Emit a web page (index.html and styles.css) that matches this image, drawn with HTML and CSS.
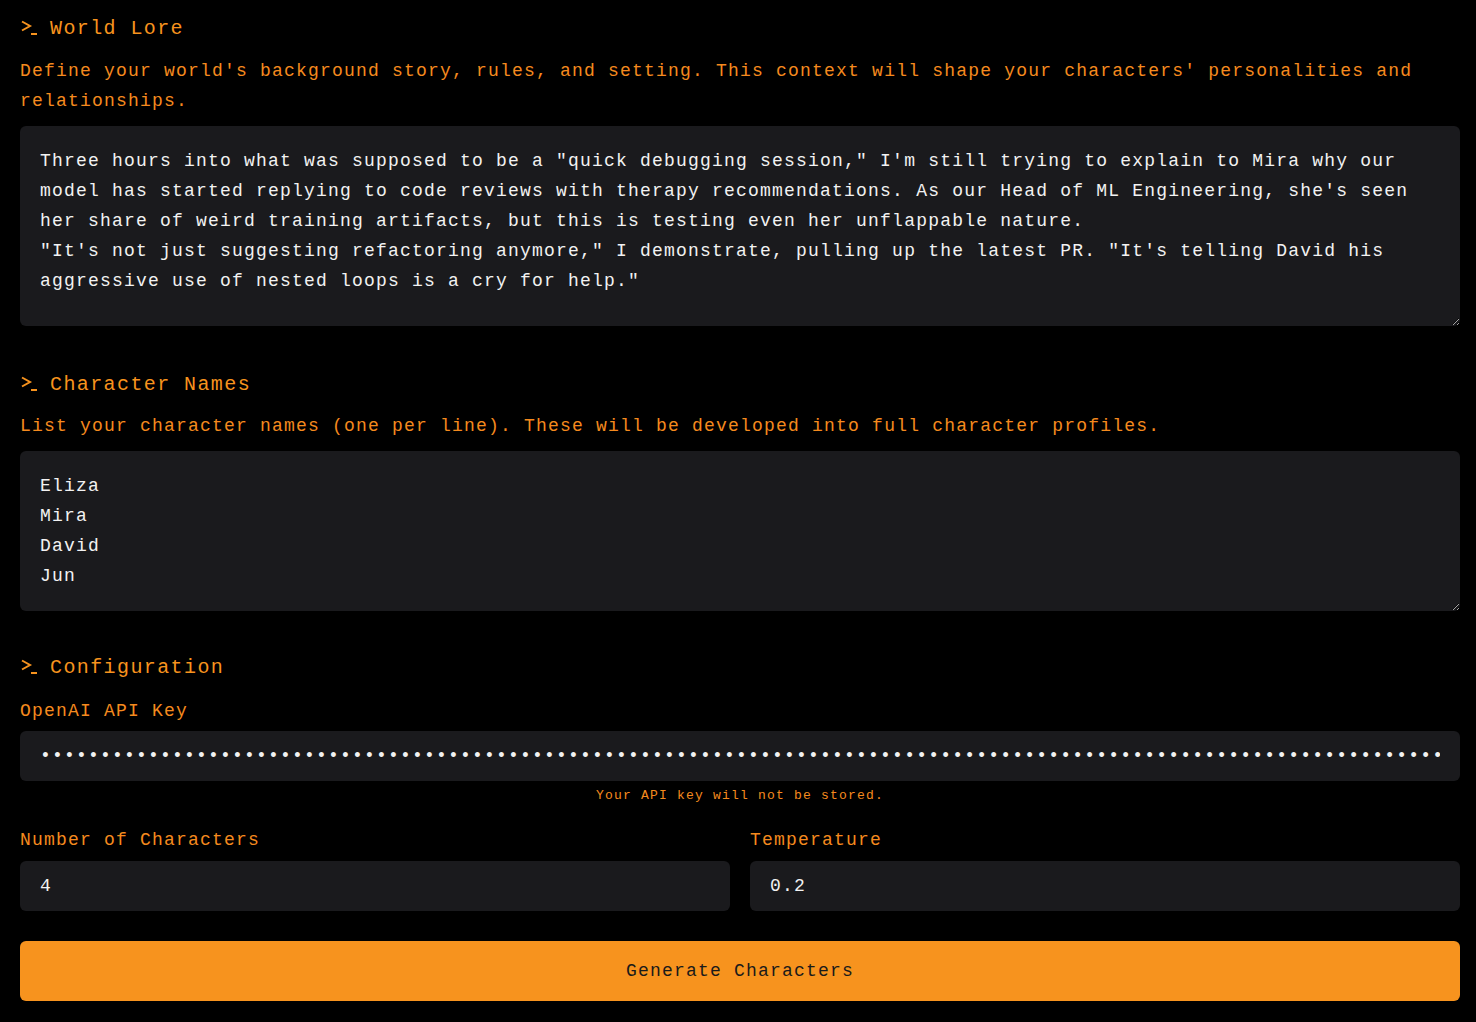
FILE: index.html
```html
<!DOCTYPE html>
<html lang="en">
<head>
<meta charset="utf-8">
<title>Character Generator</title>
<link rel="stylesheet" href="styles.css">
</head>
<body>
<main class="app">
  <section class="section">
    <h2 class="heading">
      <svg class="term-icon" width="18" height="18" viewBox="0 0 18 18" aria-hidden="true">
        <polyline points="2,3.5 10,8 2,12.5" fill="none" stroke="currentColor" stroke-width="2" stroke-linejoin="miter"/>
        <line x1="11" y1="16" x2="17" y2="16" stroke="currentColor" stroke-width="2"/>
      </svg>
      <span>World Lore</span>
    </h2>
    <p class="desc desc-first">Define your world's background story, rules, and setting. This context will shape your characters' personalities and relationships.</p>
    <textarea class="area area-lore">Three hours into what was supposed to be a "quick debugging session," I'm still trying to explain to Mira why our model has started replying to code reviews with therapy recommendations. As our Head of ML Engineering, she's seen her share of weird training artifacts, but this is testing even her unflappable nature.
"It's not just suggesting refactoring anymore," I demonstrate, pulling up the latest PR. "It's telling David his aggressive use of nested loops is a cry for help."</textarea>
  </section>

  <section class="section section-gap">
    <h2 class="heading">
      <svg class="term-icon" width="18" height="18" viewBox="0 0 18 18" aria-hidden="true">
        <polyline points="2,3.5 10,8 2,12.5" fill="none" stroke="currentColor" stroke-width="2" stroke-linejoin="miter"/>
        <line x1="11" y1="16" x2="17" y2="16" stroke="currentColor" stroke-width="2"/>
      </svg>
      <span>Character Names</span>
    </h2>
    <p class="desc desc-second">List your character names (one per line). These will be developed into full character profiles.</p>
    <textarea class="area area-names">Eliza
Mira
David
Jun</textarea>
  </section>

  <section class="section section-gap2">
    <h2 class="heading">
      <svg class="term-icon" width="18" height="18" viewBox="0 0 18 18" aria-hidden="true">
        <polyline points="2,3.5 10,8 2,12.5" fill="none" stroke="currentColor" stroke-width="2" stroke-linejoin="miter"/>
        <line x1="11" y1="16" x2="17" y2="16" stroke="currentColor" stroke-width="2"/>
      </svg>
      <span>Configuration</span>
    </h2>
    <label class="label label-first" for="apikey">OpenAI API Key</label>
    <input class="field field-key" id="apikey" type="password" value="sk-proj-abcdefghijklmnopqrstuvwxyz0123456789ABCDEFGHIJKLMNOPQRSTUVWXYZabcdefghijklmnopqrstuvwxyz0123456789ABCDEFGHIJKLMNOPQRSTUVWX">
    <p class="note">Your API key will not be stored.</p>

    <div class="row">
      <div class="col">
        <label class="label" for="num">Number of Characters</label>
        <input class="field" id="num" type="text" value="4">
      </div>
      <div class="col">
        <label class="label" for="temp">Temperature</label>
        <input class="field" id="temp" type="text" value="0.2">
      </div>
    </div>

    <button class="btn" type="button">Generate Characters</button>
  </section>
</main>
</body>
</html>
```

FILE: styles.css
```css
* {
  box-sizing: border-box;
}

html, body {
  margin: 0;
  padding: 0;
  background: #000;
}

body {
  font-family: "Courier New", "Nimbus Mono PS", "Nimbus Mono L", "FreeMono", "Liberation Mono", monospace;
  font-size: 18px;
  letter-spacing: 1.2px;
  color: #f7931e;
}

.app {
  padding: 14px 16px 21px 20px;
  display: flex;
  flex-direction: column;
}

.section {
  display: flex;
  flex-direction: column;
}

.section-gap {
  margin-top: 44px;
}

.section-gap2 {
  margin-top: 42px;
}

.heading {
  margin: 0;
  display: flex;
  align-items: center;
  gap: 12px;
  font-size: 20px;
  font-weight: normal;
  line-height: 30px;
  letter-spacing: 1.4px;
  color: #f7931e;
}

.term-icon {
  flex: none;
  color: #f7931e;
  margin-top: -4px;
}

.desc {
  margin: 0;
  line-height: 30px;
  color: #f58a1e;
}

.desc-first {
  margin-top: 12px;
}

.desc-second {
  margin-top: 11px;
}

.area {
  display: block;
  width: 100%;
  padding: 20px 20px 18px;
  border: none;
  border-radius: 6px;
  background: #1a1a1d;
  color: #f2f2f2;
  font-family: inherit;
  font-size: 18px;
  letter-spacing: 1.2px;
  line-height: 30px;
  outline: none;
  overflow: hidden;
}

.area-lore {
  height: 200px;
  margin-top: 10px;
}

.area-names {
  height: 160px;
  margin-top: 10px;
}

.label {
  display: block;
  line-height: 30px;
  color: #f58a1e;
}

.label-first {
  margin-top: 13px;
}

.field {
  display: block;
  width: 100%;
  height: 50px;
  margin-top: 6px;
  padding: 0 20px;
  border: none;
  border-radius: 6px;
  background: #1a1a1d;
  color: #f2f2f2;
  font-family: inherit;
  font-size: 18px;
  letter-spacing: 1.2px;
  outline: none;
}

.field-key {
  margin-top: 5px;
}

.note {
  margin: 7px 0 0;
  font-size: 13px;
  line-height: 16px;
  text-align: center;
  color: #f58a1e;
}

.row {
  display: grid;
  grid-template-columns: 1fr 1fr;
  gap: 20px;
  margin-top: 21px;
}

.col {
  display: flex;
  flex-direction: column;
}

.btn {
  margin-top: 30px;
  height: 60px;
  width: 100%;
  border: none;
  border-radius: 6px;
  background: #f7931e;
  color: #1a1a1a;
  font-family: inherit;
  font-size: 18px;
  letter-spacing: 1.2px;
  cursor: pointer;
}
```
